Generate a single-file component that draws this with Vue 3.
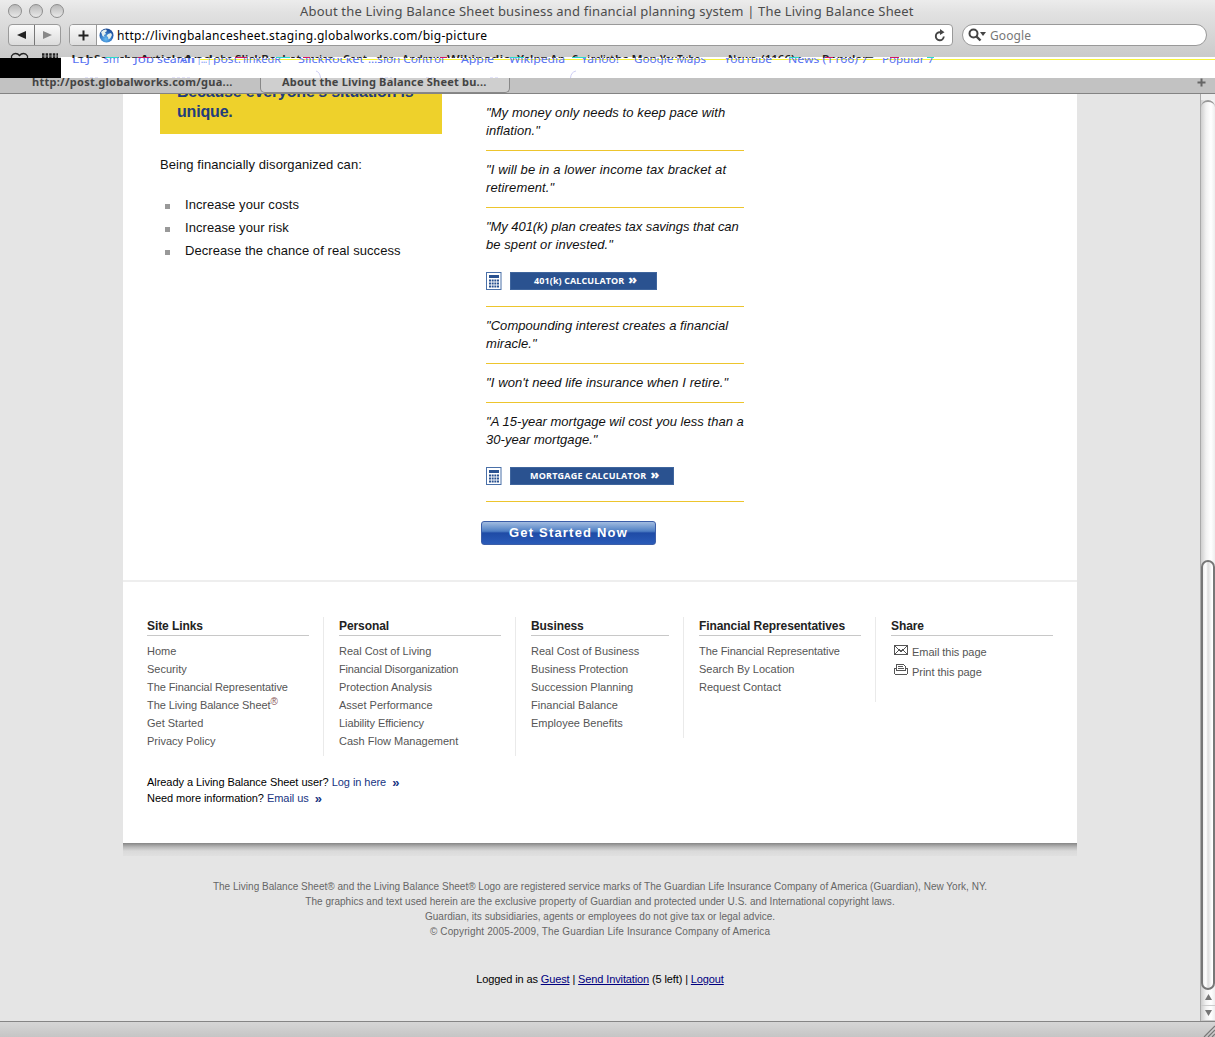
<script setup>
const strip = [
  [71, 24, 'Job'], [94, 44, 'Search▾'], [140, 50, 'Articles'], [183, 30, 'And'], [214, 18, 'ebs'],
  [235, 66, 'SlickRocket'], [304, 30, 'ession'], [343, 50, 'Cont…der'], [402, 40, 'Andrew'],
  [447, 64, 'Wikipedia'], [517, 48, 'Yelp▾ An'], [572, 42, 'Craigslist'], [615, 42, 'bs Map'],
  [660, 40, 'YouTube'], [728, 28, 'News'], [761, 40, '(1166)▾'], [822, 52, 'Popular▾']
]
const ghost = [
  [72, 18, 'LLJ'], [103, 16, 'Sm'], [134, 20, 'Job'], [157, 38, 'search'], [180, 14, 'An'], [197, 14, '|...|'],
  [213, 28, 'post.'], [243, 38, 'linkedR'], [298, 66, 'SlickRocket'], [368, 76, '…sion Control'],
  [461, 33, 'Apple'], [509, 56, 'Wikipedia'], [581, 38, 'Yahoo!'], [634, 72, 'Google Maps'],
  [724, 48, 'YouTube'], [788, 80, 'News (1166) 7'], [882, 52, 'Popular 7']
]
const statements = [
  { lines: ['"My money only needs to keep pace with', 'inflation."'] },
  { lines: ['"I will be in a lower income tax bracket at', 'retirement."'] },
  { lines: ['"My 401(k) plan creates tax savings that can', 'be spent or invested."'], calc: '401(k) CALCULATOR', cls: 'k' },
  { lines: ['"Compounding interest creates a financial', 'miracle."'] },
  { lines: ['"I won\'t need life insurance when I retire."'] },
  { lines: ['"A 15-year mortgage wil cost you less than a', '30-year mortgage."'], calc: 'MORTGAGE CALCULATOR', cls: 'm' }
]
const columns = [
  { title: 'Site Links', items: ['Home', 'Security', 'The Financial Representative', 'The Living Balance Sheet', 'Get Started', 'Privacy Policy'] },
  { title: 'Personal', items: ['Real Cost of Living', 'Financial Disorganization', 'Protection Analysis', 'Asset Performance', 'Liability Efficiency', 'Cash Flow Management'] },
  { title: 'Business', narrow: true, items: ['Real Cost of Business', 'Business Protection', 'Succession Planning', 'Financial Balance', 'Employee Benefits'] },
  { title: 'Financial Representatives', items: ['The Financial Representative', 'Search By Location', 'Request Contact'] }
]
const tight = t => t.startsWith('The ') || t === 'Liability Efficiency'
</script>

<template>
  <div class="window">
    <header class="chrome">
      <div class="titlebar">
        <div class="lights"><i></i><i></i><i></i></div>
        <div class="title">About the Living Balance Sheet business and financial planning system | The Living Balance Sheet</div>
      </div>
      <div class="toolbar">
        <div class="nav">
          <span><svg width="10" height="8"><path d="M0 4L9 0V8Z" fill="#222" /></svg></span>
          <span><svg width="10" height="8"><path d="M9 4L0 0V8Z" fill="#888" /></svg></span>
        </div>
        <div class="address">
          <span class="plus"><svg width="11" height="11"><path d="M5.5 0.5V10.5M0.5 5.5H10.5" stroke="#222" stroke-width="2" /></svg></span>
          <svg class="globe" width="15" height="15" viewBox="0 0 15 15">
            <defs><radialGradient id="gl" cx=".45" cy=".75" r=".75"><stop offset="0" stop-color="#64baf2" /><stop offset=".6" stop-color="#2e6fbe" /><stop offset="1" stop-color="#1b478f" /></radialGradient></defs>
            <circle cx="7.5" cy="7.5" r="7" fill="url(#gl)" />
            <path d="M2 4Q4 1.3 7 1.5L8 3L6 4.5L7 6L5 7L5.5 9L3.5 8ZM9 6L12 5L13 7L11.5 10L9.5 11.5L9 9L7.5 8Z" fill="#e4f0ee" />
          </svg>
          <span class="url">http://livingbalancesheet.staging.globalworks.com/big-picture</span>
          <svg class="reload" width="12" height="13" viewBox="0 0 12 13"><path d="M9.8 7.5A4 4 0 1 1 6 3.200H8" fill="none" stroke="#444" stroke-width="1.900" /><path d="M6 0L10.500 3.200L6 6Z" fill="#444" /></svg>
        </div>
        <div class="search">
          <svg width="19" height="14" viewBox="0 0 19 14"><circle cx="5.5" cy="5.5" r="4" fill="none" stroke="#444" stroke-width="2" /><path d="M8.5 8.5L12.5 12.5" stroke="#444" stroke-width="2.4" /><path d="M12 4H18L15 8Z" fill="#444" /></svg>
          <span>Google</span>
        </div>
      </div>
      <svg class="bookmarks" width="1215" height="32" viewBox="0 46 1215 32">
        <defs>
          <clipPath id="top"><rect x="0" y="46" width="1215" height="12" /></clipPath>
          <clipPath id="low"><rect x="0" y="58" width="1215" height="7" /></clipPath>
        </defs>
        <rect y="57" width="1215" height="21" fill="#fff" />
        <rect y="57" width="61" height="1" fill="#cecece" />
        <g clip-path="url(#top)">
          <path d="M11.500 60V56Q13 53.500 15.500 53.500Q18 53.500 19.500 55.500Q21 53.500 23.500 53.500Q26 53.500 27.500 56V60" fill="none" stroke="#222" stroke-width="1.300" />
          <path d="M42 54.500H58M42 57.500H58" stroke="#222" stroke-width="2.500" stroke-dasharray="2.500 1.100" />
          <g class="over"><text v-for="b in strip" :key="b[0]" :x="b[0]" y="63" :textLength="b[1]" lengthAdjust="spacingAndGlyphs">{{ b[2] }}</text></g>
        </g>
        <path d="M200 59.500H1215" stroke="#f6f23c" />
        <path d="M106 57.500H118M276 57.500H290M510 57.500H524M572 57.500H586M789 57.500H799M927 57.500H934" stroke="#29dbc9" />
        <path d="M138 57.500H150M235 57.500H247M303 57.500H310M440 57.500H447M825 57.500H833M890 57.500H899" stroke="#d51761" />
        <g clip-path="url(#low)" class="under"><text v-for="b in ghost" :key="b[0]" :x="b[0]" y="63" :textLength="b[1]" lengthAdjust="spacingAndGlyphs">{{ b[2] }}</text></g>
        <path d="M316 71Q320 72 320.500 78M576 71Q571 72 570.500 78" fill="none" stroke="#cfcff5" />
        <path d="M85 77.500H98M172 77.500H190M380 77.500H392M426 77.500H434M490 77.500H500" stroke="#e4e4fa" stroke-dasharray="3 2" />
        <rect y="58" width="61" height="20" fill="#000" />
      </svg>
      <div class="tabs">
        <div class="tab first"><span>http://post.globalworks.com/gua...</span></div>
        <div class="tab active"><span>About the Living Balance Sheet bu...</span></div>
        <svg class="add" width="9" height="9"><path d="M4.500 .5V8.500M.5 4.500H8.500" stroke="#666" stroke-width="2" /></svg>
      </div>
    </header>

    <div class="view">
      <div class="page">
        <main class="sheet">
          <div class="content">
            <section class="left">
              <div class="callout"><span>Because everyone's situation is</span><br /><span>unique.</span></div>
              <p>Being financially disorganized can:</p>
              <ul><li>Increase your costs</li><li>Increase your risk</li><li>Decrease the chance of real success</li></ul>
            </section>
            <section class="mid">
              <div v-for="(s, i) in statements" :key="i" :class="['statement', 's' + i]">
                <div v-for="l in s.lines" :key="l" class="line">{{ l }}</div>
                <div v-if="s.calc" class="calcrow">
                  <svg width="16" height="18" viewBox="0 0 16 18"><rect x=".5" y=".5" width="14.500" height="17" fill="#fff" stroke="#4a70a8" /><rect x="3" y="3" width="10" height="3" fill="#2a5290" /><path d="M3 8.500H13M3 11.500H13M3 14.500H13" stroke="#2a5290" stroke-width="2" stroke-dasharray="2 .67" /></svg>
                  <a :class="['calc', s.cls]"><span>{{ s.calc }}</span><b>»</b></a>
                </div>
              </div>
              <a class="start"><span>Get Started Now</span></a>
            </section>
          </div>
          <div class="links">
            <div class="cols">
              <div v-for="c in columns" :key="c.title" :class="['col', { narrow: c.narrow }]">
                <h4>{{ c.title }}</h4>
                <div v-for="t in c.items" :key="t" :class="['item', { tight: tight(t), tighter: t === 'Financial Disorganization' }]">{{ t }}<sup v-if="t === 'The Living Balance Sheet'">®</sup></div>
              </div>
              <div class="col last">
                <h4>Share</h4>
                <div class="share"><svg width="14" height="10" shape-rendering="crispEdges"><path d="M.5 .5H13.500V9.500H.5ZM1 1L7 6.500L13 1M1 9L5 5M13 9L9 5" fill="none" stroke="#555" /></svg><span>Email this page</span></div>
                <div class="share two"><svg width="14" height="11" shape-rendering="crispEdges"><path d="M2.500 6.500V.5H9.500L11.500 2.500V6.500H2.500M4 2.500H9M4 4.500H10M2 4.500H.5V9.500L1.500 10.500H12.500L13.500 9.500V4.500H12" fill="none" stroke="#555" /></svg><span>Print this page</span></div>
              </div>
            </div>
            <div class="more">
              <div>Already a Living Balance Sheet user? <a>Log in here</a><b>»</b></div>
              <div>Need more information? <a>Email us</a><b>»</b></div>
            </div>
          </div>
        </main>
        <div class="shadow"></div>
        <div class="legal">
          <div class="l1">The Living Balance Sheet® and the Living Balance Sheet® Logo are registered service marks of The Guardian Life Insurance Company of America (Guardian), New York, NY.</div>
          <div class="l2">The graphics and text used herein are the exclusive property of Guardian and protected under U.S. and International copyright laws.</div>
          <div class="l3">Guardian, its subsidiaries, agents or employees do not give tax or legal advice.</div>
          <div class="l4">© Copyright 2005-2009, The Guardian Life Insurance Company of America</div>
        </div>
        <div class="login">Logged in as <a>Guest</a> | <a>Send Invitation</a> (5 left) | <a>Logout</a></div>
      </div>
      <div class="scroll">
        <div class="cap"></div>
        <div class="track"></div>
        <div class="thumb"></div>
        <div class="arrow"><svg width="7" height="6"><path d="M3.500 0L7 6H0Z" fill="#777" /></svg></div>
        <div class="arrow"><svg width="7" height="6"><path d="M3.500 6L7 0H0Z" fill="#777" /></svg></div>
      </div>
    </div>
    <footer class="status"><svg width="12" height="12"><path d="M1 12L12 1M5 12L12 5M9 12L12 9" stroke="#777" stroke-width="1.200" /></svg></footer>
  </div>
</template>

<style>
body { background: #e5e5e5; }
</style>
<style scoped>
.window { width: 1215px; height: 1037px; display: flex; flex-direction: column; overflow: hidden; font-family: "Liberation Sans", Arial, sans-serif; color: #111; }
.window * { box-sizing: border-box; }
.chrome { height: 94px; background: linear-gradient(#ececec 0, #e2e2e2 12px, #cecece 50px, #cacaca 57px); font-family: "Noto Sans", sans-serif; white-space: nowrap; }
.titlebar { height: 24px; display: flex; align-items: center; padding-left: 8px; }
.lights { display: flex; gap: 7px; width: 292px; margin-top: -2px; }
.lights i { width: 14px; height: 14px; border-radius: 50%; border: 1px solid #8e8e8e; background: linear-gradient(#b9b9b9, #e8e8e8); }
.title { font-size: 13px; color: #4c4c4c; letter-spacing: .175px; margin-top: -2px; }
.toolbar { height: 22px; display: flex; padding-left: 8px; }
.nav { width: 53px; height: 22px; display: flex; border: 1px solid #9a9a9a; border-radius: 4px; background: linear-gradient(#fafafa, #dcdcdc); }
.nav span { flex: 1; display: flex; align-items: center; justify-content: center; }
.nav span + span { border-left: 1px solid #777; }
.address { margin-left: 8px; width: 884px; height: 22px; display: flex; align-items: center; border: 1px solid #999; border-radius: 4px; background: #fff; }
.plus { width: 27px; height: 20px; display: flex; align-items: center; justify-content: center; background: linear-gradient(#fafafa, #dedede); border-right: 1px solid #999; border-radius: 3px 0 0 3px; }
.globe { margin-left: 2px; }
.url { margin-left: 3px; font-size: 12px; color: #000; flex: 1; letter-spacing: .315px; }
.reload { margin-right: 6px; }
.search { margin-left: 9px; width: 245px; height: 22px; border: 1px solid #999; border-radius: 11px; background: #fff; display: flex; align-items: center; padding-left: 5px; font-size: 12px; color: #777; }
.search span { margin-left: 3px; letter-spacing: .1px; }
.bookmarks { display: block; }
.over text { font: 11px "Noto Sans", sans-serif; fill: #222; font-weight: 600; }
.under text { font: 11px "Noto Sans", sans-serif; fill: #5873f2; }
.tabs { height: 16px; display: flex; background: #c2c2c2; border-bottom: 1px solid #838383; overflow: hidden; }
.tab { font-size: 11px; font-weight: 700; color: #444; line-height: 7px; height: 15px; letter-spacing: .27px; }
.first { width: 260px; padding-left: 32px; }
.active { width: 250px; padding-left: 21px; background: #cfcfcf; border: 1px solid #888; border-top: 0; border-radius: 0 0 5px 5px; letter-spacing: .21px; }
.add { margin: 0 9px 0 auto; }
.view { height: 927px; display: flex; background: #e5e5e5; }
.page { width: 1200px; height: 927px; overflow: hidden; }
.sheet { margin-left: 123px; width: 954px; height: 749px; background: #fff; }
.content { display: flex; height: 486px; padding-left: 37px; font-size: 13px; }
.left { width: 326px; letter-spacing: .07px; }
.callout { width: 282px; height: 40px; overflow: hidden; background: #eed12b; color: #233c7c; font-weight: 700; font-size: 16px; line-height: 20px; padding-left: 17px; letter-spacing: -.18px; }
.callout span { position: relative; top: -12px; }
.left p { margin: 22px 0 0; line-height: 18px; }
.left ul { margin: 19px 0 0; padding: 0; list-style: none; }
.left li { height: 23px; line-height: 23px; display: flex; align-items: center; }
.left li::before { content: ""; width: 5px; height: 5px; background: #999; margin: 4px 15px 0 5px; }
.mid { width: 258px; }
.statement { padding: 10px 0; border-bottom: 1px solid #edc52d; font-style: italic; }
.s0 .line { letter-spacing: .09px; }
.s1 .line { letter-spacing: .135px; }
.s2 .line { letter-spacing: -.06px; }
.s2 .line + .line { letter-spacing: .07px; }
.s3 .line { letter-spacing: .05px; }
.s4 .line { letter-spacing: .1px; }
.s5 .line { letter-spacing: .035px; }
.line { height: 18px; line-height: 18px; white-space: nowrap; }
.calcrow { display: flex; gap: 8px; margin-top: 18px; height: 18px; margin-bottom: 6px; }
.calc { height: 18px; background: #2a5290; border: 1px solid #3f659d; color: #fff; font: 700 9px/16px "Open Sans", sans-serif; display: flex; white-space: nowrap; }
.calc b { margin-left: 4px; font-size: 13px; line-height: 12px; }
.k { width: 147px; padding-left: 23px; letter-spacing: .1px; }
.m { width: 164px; padding-left: 19px; letter-spacing: .2px; }
.start { margin: 19px 0 0 -5px; width: 175px; height: 24px; border: 1px solid #3c5ea8; border-radius: 3px; background: linear-gradient(#a2bce0, #4f7fc4 42%, #1f4ba6 50%, #2a5bb8); color: #fff; font-weight: 700; letter-spacing: 1.2px; display: flex; align-items: center; justify-content: center; padding-bottom: 2px; }
.links { border-top: 2px solid #eee; padding: 35px 0 0 24px; }
.cols { display: flex; align-items: flex-start; height: 157px; }
.col { width: 177px; padding: 0 14px 5px 0; border-right: 1px solid #eaeaea; margin-right: 15px; font-size: 11px; color: #555; white-space: nowrap; }
.narrow { width: 153px; }
.col.last { width: 162px; padding: 0; border: 0; margin: 0; }
.col h4 { margin: 0 0 7px; height: 19px; font-size: 12px; line-height: 18px; color: #222; border-bottom: 1px solid #c8c8c8; letter-spacing: -.08px; }
.item { height: 18px; line-height: 17px; }
.tight { letter-spacing: -.08px; }
.tighter { letter-spacing: -.15px; }
.item sup { font-size: 10px; line-height: 0; color: #855; vertical-align: 4px; }
.share { display: flex; height: 20px; line-height: 18px; padding-left: 3px; letter-spacing: -.04px; }
.share svg { margin: 2px 4px 0 0; }
.share.two svg { margin-top: 1px; }
.more { font-size: 11px; line-height: 16px; white-space: nowrap; color: #000; letter-spacing: -.05px; }
.more a { color: #173482; }
.more b { color: #173482; font-size: 13px; line-height: 10px; margin-left: 6px; position: relative; top: 1px; }
.shadow { margin-left: 123px; width: 954px; height: 13px; background: linear-gradient(#858585, #b8b8b8 4px, #dadada 8px, #e0e0e0); }
.legal { padding-top: 23px; text-align: center; font-size: 10px; line-height: 15px; color: #666; white-space: nowrap; }
.l1, .l3 { letter-spacing: .02px; }
.l2 { letter-spacing: .04px; }
.l4 { letter-spacing: .13px; }
.login { margin-top: 32px; text-align: center; font-size: 11px; line-height: 16px; color: #000; letter-spacing: -.12px; }
.login a { color: #000080; text-decoration: underline; }
.scroll { width: 15px; display: flex; flex-direction: column; border-left: 1px solid #aaa; background: linear-gradient(90deg, #cfcfcf, #f1f1f1 5px, #fff 10px, #eee); }
.cap { height: 6px; background: #eee; }
.track { height: 460px; border-top: 2px solid #999; border-radius: 7px 7px 0 0; }
.thumb { height: 430px; border: 2px solid #777; border-radius: 7px; background: linear-gradient(90deg, #eee, #fff 3px, #ddd 5px, #fff 9px, #fff); }
.arrow { flex: 1; display: flex; align-items: center; justify-content: center; border-bottom: 1px solid #ccc; }
.status { height: 16px; border-top: 1px solid #858585; background: linear-gradient(#d6d6d6, #c5c5c5); display: flex; justify-content: flex-end; align-items: flex-end; }
</style>
